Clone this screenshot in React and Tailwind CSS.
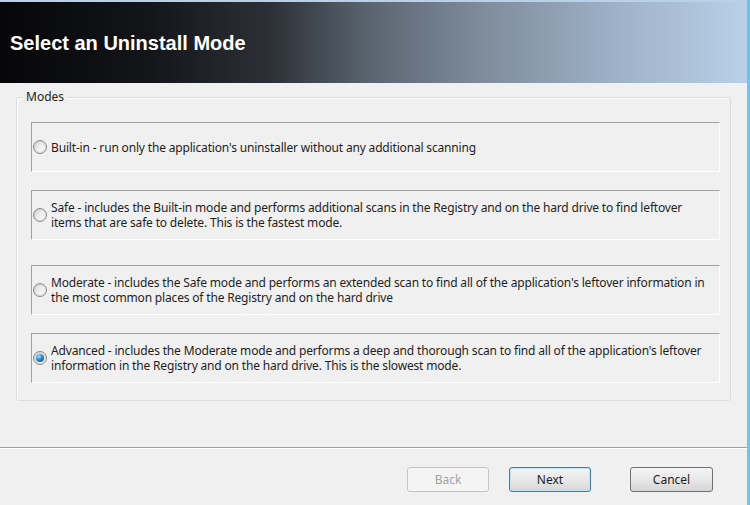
import React, { useState } from 'react';

const MODES = [
  {
    id: 'builtin',
    lines: ["Built-in - run only the application's uninstaller without any additional scanning"],
    gap: 'mt-0',
  },
  {
    id: 'safe',
    lines: [
      'Safe - includes the Built-in mode and performs additional scans in the Registry and on the hard drive to find leftover',
      'items that are safe to delete. This is the fastest mode.',
    ],
    gap: 'mt-[18px]',
  },
  {
    id: 'moderate',
    lines: [
      "Moderate - includes the Safe mode and performs an extended scan to find all of the application's leftover information in",
      'the most common places of the Registry and on the hard drive',
    ],
    gap: 'mt-[25px]',
  },
  {
    id: 'advanced',
    lines: [
      "Advanced - includes the Moderate mode and performs a deep and thorough scan to find all of the application's leftover",
      'information in the Registry and on the hard drive. This is the slowest mode.',
    ],
    gap: 'mt-[18px]',
  },
];

function Radio({ checked }) {
  return (
    <span className="w-[14px] h-[14px] rounded-full border border-[#8c8c8c] bg-gradient-to-br from-[#d4d4d4] via-[#eeeeee] to-[#fdfdfd] flex items-center justify-center flex-shrink-0 shadow-[inset_0_0_2px_#b5b5b5]">
      {checked && (
        <span className="w-[8px] h-[8px] rounded-full bg-[radial-gradient(circle_at_35%_30%,#a6e0ff_0%,#2a8ccc_45%,#0b3f6e_100%)]" />
      )}
    </span>
  );
}

export default function App() {
  const [mode, setMode] = useState('advanced');

  return (
    <div className="w-[750px] h-[505px] flex bg-[#f0f0f0] overflow-hidden" style={{ fontFamily: '"Noto Sans", "DejaVu Sans", sans-serif' }}>
      <div className="flex-1 flex flex-col">
        {/* Header */}
        <div className="h-[2px] bg-[#b9d0e8]" />
        <div className="h-[81px] flex items-center pl-[10px] bg-[linear-gradient(90deg,#060608_0%,#131519_20%,#2c3036_36%,#5c6773_50%,#7f8d9c_65%,#9db0c6_82%,#b9d0e8_100%)]">
          <h1 className="text-white font-bold text-[20px] mt-[1px]" style={{ fontFamily: '"Liberation Sans", Arial, sans-serif' }}>
            Select an Uninstall Mode
          </h1>
        </div>

        {/* Modes group */}
        <div className="relative mt-[14px] ml-[16px] mr-[16px] h-[304px] border border-[#d9dde0] rounded-[3px] pt-[24px] pl-[14px] pr-[10px] shadow-[inset_1px_1px_0_#ffffff]">
          <span className="absolute -top-[9px] left-[6px] px-[3px] bg-[#f0f0f0] text-[12px] leading-[16px] text-[#1e1e1e]">Modes</span>
          {MODES.map((m) => (
            <div
              key={m.id}
              onClick={() => setMode(m.id)}
              className={`${m.gap} h-[50px] flex items-center gap-[4px] pl-[1px] overflow-hidden border-t border-l border-t-[#a0a0a0] border-l-[#a0a0a0] border-r border-b border-r-white border-b-white cursor-default`}
            >
              <Radio checked={mode === m.id} />
              <div className="text-[12px] leading-[15px] tracking-[-0.17px] text-[#1e1e1e] whitespace-nowrap">
                {m.lines.map((l) => (
                  <div key={l}>{l}</div>
                ))}
              </div>
            </div>
          ))}
        </div>

        {/* Separator + buttons */}
        <div className="mt-[46px] border-t border-[#a0a0a0] shadow-[0_1px_0_#ffffff]" />
        <div className="flex items-center pt-[19px] pl-[407px] text-[12px]">
          <button disabled className="w-[82px] h-[25px] rounded-[3px] border border-[#c2c5c8] bg-[#f4f4f4] text-[#a3a3a3]">
            Back
          </button>
          <button className="ml-[20px] w-[82px] h-[25px] rounded-[3px] border border-[#3c7fb1] bg-gradient-to-b from-[#f4f4f4] via-[#e8e8e8] to-[#d6d6d6] text-[#1e1e1e] shadow-[inset_0_0_0_1px_#bfe3f7]">
            Next
          </button>
          <button className="ml-[39px] w-[83px] h-[25px] rounded-[3px] border border-[#707070] bg-gradient-to-b from-[#f4f4f4] via-[#e8e8e8] to-[#d4d4d4] text-[#1e1e1e]">
            Cancel
          </button>
        </div>
      </div>
      <div className="w-[3px] bg-[#6ec4ea]" />
    </div>
  );
}
